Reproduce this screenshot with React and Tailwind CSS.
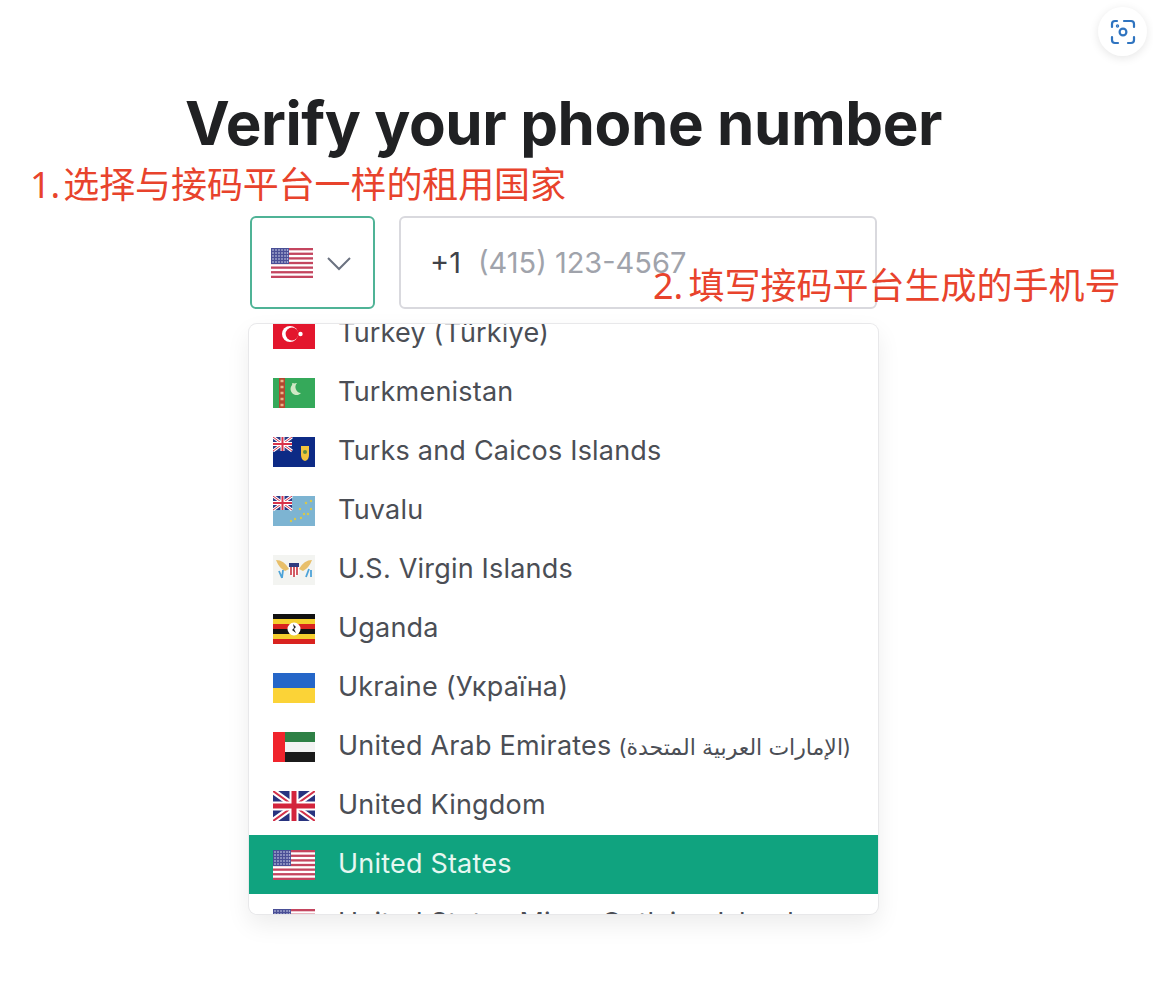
import React from 'react';

const UnionMini = () => (
  <g>
    <rect width="19" height="14" fill="#2b3a86" />
    <path d="M0 0L19 14M19 0L0 14" stroke="#fff" strokeWidth="3" />
    <path d="M0 0L19 14M19 0L0 14" stroke="#d8324a" strokeWidth="1" />
    <path d="M9.5 0V14M0 7H19" stroke="#fff" strokeWidth="4" />
    <path d="M9.5 0V14M0 7H19" stroke="#d8324a" strokeWidth="2" />
  </g>
);

const UsFlag = () => (
  <g>
    <rect width="42" height="30" fill="#fff" />
    {[0, 1, 2, 3, 4, 5, 6].map((i) => (
      <rect key={i} y={i * 4.62} width="42" height="2.31" fill="#c4455f" />
    ))}
    <rect width="18" height="16" fill="#4a4f96" />
    {[2, 5, 8, 11, 14].map((y) =>
      [2, 5, 8, 11, 14, 16.5].map((x) => <circle key={x + '-' + y} cx={x} cy={y} r="0.8" fill="#d9dcf0" />)
    )}
  </g>
);

const flags = {
  turkey: (
    <g>
      <rect width="42" height="30" fill="#e3162d" />
      <circle cx="17" cy="15" r="8" fill="#fff" />
      <circle cx="19" cy="15" r="6.4" fill="#e3162d" />
      <circle cx="27.5" cy="15" r="2.2" fill="#fff" />
    </g>
  ),
  turkmenistan: (
    <g>
      <rect width="42" height="30" fill="#35a95a" />
      <rect x="6" width="6" height="30" fill="#b3472f" />
      <path d="M7.5 3h3M7.5 9h3M7.5 15h3M7.5 21h3M7.5 27h3" stroke="#e9b58a" strokeWidth="2.4" />
      <path d="M24 5a6 6 0 1 0 4 10a6 6 0 0 1-4-10z" fill="#cfe8c4" />
      <circle cx="20" cy="6" r="1" fill="#cfe8c4" />
    </g>
  ),
  caicos: (
    <g>
      <rect width="42" height="30" fill="#0d2a85" />
      <UnionMini />
      <path d="M28 9h8v9q0 5-4 6q-4-1-4-6z" fill="#f1c33c" />
      <circle cx="32" cy="15" r="2" fill="#5f8f3e" />
    </g>
  ),
  tuvalu: (
    <g>
      <rect width="42" height="30" fill="#7db4d2" />
      <UnionMini />
      <g fill="#d8c94a">
        <circle cx="38" cy="5" r="1.2" />
        <circle cx="33" cy="7" r="1.2" />
        <circle cx="38" cy="13" r="1.2" />
        <circle cx="27" cy="13" r="1.2" />
        <circle cx="31" cy="18" r="1.2" />
        <circle cx="35" cy="18" r="1.2" />
        <circle cx="28" cy="22" r="1.2" />
        <circle cx="22" cy="23" r="1.2" />
        <circle cx="18" cy="25" r="1.2" />
      </g>
    </g>
  ),
  virgin: (
    <g>
      <rect width="42" height="30" fill="#f3f4f1" />
      <path d="M3 5q8 0 13 9l-4 2q-6-3-9-11zM39 5q-8 0-13 9l4 2q6-3 9-11z" fill="#e8bf6a" />
      <path d="M16 8h10v9q0 3-5 5q-5-2-5-5z" fill="#fff" />
      <rect x="16" y="8" width="10" height="4" fill="#2f3c80" />
      <path d="M18 12v8M21 12v10M24 12v8" stroke="#c9353f" strokeWidth="1.6" />
      <path d="M6 16l3 7M10 15l-1 8M33 22l3-8M38 15v7" stroke="#4da3d8" strokeWidth="1.8" />
    </g>
  ),
  uganda: (
    <g>
      <rect width="42" height="30" fill="#111" />
      <rect y="5" width="42" height="5" fill="#f4cf2e" />
      <rect y="10" width="42" height="5" fill="#d9231f" />
      <rect y="15" width="42" height="5" fill="#111" />
      <rect y="20" width="42" height="5" fill="#f4cf2e" />
      <rect y="25" width="42" height="5" fill="#d9231f" />
      <circle cx="21" cy="15" r="6.5" fill="#fff" />
      <path d="M20 10l3 3l-2 2l2 4l-4-3l2-2z" fill="#222" />
    </g>
  ),
  ukraine: (
    <g>
      <rect width="42" height="15" fill="#2566c8" />
      <rect y="15" width="42" height="15" fill="#fbd337" />
    </g>
  ),
  uae: (
    <g>
      <rect width="42" height="10" fill="#2e8045" />
      <rect y="10" width="42" height="10" fill="#f3f3f3" />
      <rect y="20" width="42" height="10" fill="#1b1b1b" />
      <rect width="12" height="30" fill="#f0242c" />
    </g>
  ),
  uk: (
    <g>
      <rect width="42" height="30" fill="#28337f" />
      <path d="M0 0L42 30M42 0L0 30" stroke="#fff" strokeWidth="6" />
      <path d="M0 0L42 30M42 0L0 30" stroke="#d3324a" strokeWidth="2" />
      <path d="M21 0V30M0 15H42" stroke="#fff" strokeWidth="9" />
      <path d="M21 0V30M0 15H42" stroke="#d3243c" strokeWidth="5" />
    </g>
  ),
  us: <UsFlag />,
};

const countries = [
  { name: 'Turkey (Türkiye)', flag: 'turkey' },
  { name: 'Turkmenistan', flag: 'turkmenistan' },
  { name: 'Turks and Caicos Islands', flag: 'caicos' },
  { name: 'Tuvalu', flag: 'tuvalu' },
  { name: 'U.S. Virgin Islands', flag: 'virgin' },
  { name: 'Uganda', flag: 'uganda' },
  { name: 'Ukraine (Україна)', flag: 'ukraine' },
  { name: 'United Arab Emirates', native: '(الإمارات العربية المتحدة)', flag: 'uae' },
  { name: 'United Kingdom', flag: 'uk' },
  { name: 'United States', flag: 'us', selected: true },
  { name: 'United States Minor Outlying Islands', flag: 'us' },
];

function Flag({ name }) {
  return (
    <svg width="42" height="30" viewBox="0 0 42 30" className="shrink-0">
      {flags[name]}
    </svg>
  );
}

export default function App() {
  return (
    <div className="relative h-[998px] w-[1153px] overflow-hidden bg-white font-['Inter','DejaVu_Sans',sans-serif]">
      {/* lens button */}
      <div className="absolute left-[1098px] top-[7px] flex h-[49px] w-[49px] items-center justify-center rounded-full bg-white shadow-[0_2px_10px_rgba(0,0,0,0.1)]">
        <svg width="26" height="26" viewBox="0 0 26 26" fill="none" stroke="#2f74c0" strokeWidth="2.2" strokeLinecap="round">
          <path d="M2 8V5q0-3 3-3h2M14 2h7q3 0 3 3v3M24 18v3q0 3-3 3h-3M8 24H5q-3 0-3-3v-3" />
          <circle cx="13" cy="13" r="3.4" />
          <circle cx="7.5" cy="7" r="0.6" fill="#2f74c0" />
        </svg>
      </div>

      <h1 className="pr-[26px] pt-[85px] text-center text-[60px] font-bold leading-[76px] tracking-[-0.4px] text-[#202123]">
        Verify your phone number
      </h1>

      <div className="ml-[250px] mt-[55px] w-[628px]">
        <div className="flex gap-6">
          <div className="flex h-[93px] w-[125px] items-center gap-[13px] rounded-[6px] border-2 border-[#4fb396] pl-[19px]">
            <Flag name="us" />
            <svg width="26" height="16" viewBox="0 0 26 16" fill="none" stroke="#6b7280" strokeWidth="2">
              <path d="M2 3l11 11L24 3" />
            </svg>
          </div>
          <div className="flex h-[93px] w-[478px] items-center gap-[17px] rounded-[6px] border-2 border-[#d9d9de] pl-[29px] text-[29px]">
            <span className="text-[#3f4248]">+1</span>
            <span className="text-[#a0a3ab]">(415) 123-4567</span>
          </div>
        </div>

        <div className="-ml-px mt-[15px] h-[590px] w-[629px] overflow-hidden rounded-[8px] bg-white shadow-[0_0_0_1px_#e8e8ea,0_10px_25px_rgba(0,0,0,0.08)]">
          <ul className="-mt-[20px]">
            {countries.map((c) => (
              <li
                key={c.name}
                className={
                  'flex h-[59px] items-center gap-[23px] pl-[24px] text-[27px] tracking-[0.2px] whitespace-nowrap ' +
                  (c.selected ? 'bg-[#10a37f] text-[#e6f7f1]' : 'text-[#4b4e55]')
                }
              >
                <Flag name={c.flag} />
                <span>
                  {c.name}
                  {c.native && <span className="ml-[7px] text-[22px] tracking-normal">{c.native}</span>}
                </span>
              </li>
            ))}
          </ul>
        </div>
      </div>

      {/* red notes written over the screenshot */}
      <div className="absolute left-[30px] top-[162px] font-['Noto_Sans','Noto_Sans_CJK_SC',sans-serif] text-[36px] leading-[46px] tracking-[-0.1px] text-[#e8432c] [word-spacing:-6px] whitespace-nowrap">
        1. 选择与接码平台一样的租用国家
      </div>
      <div className="absolute left-[653px] top-[263px] font-['Noto_Sans','Noto_Sans_CJK_SC',sans-serif] text-[36px] leading-[46px] text-[#e8432c] [word-spacing:-4px] whitespace-nowrap">
        2. 填写接码平台生成的手机号
      </div>
    </div>
  );
}
